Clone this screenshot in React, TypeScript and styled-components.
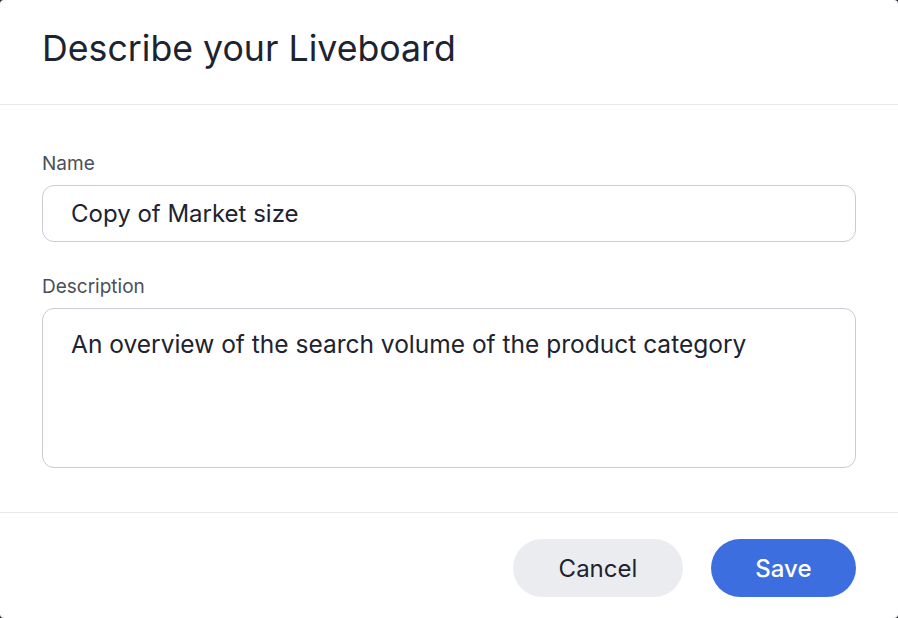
import styled, { createGlobalStyle } from "styled-components";

const GlobalStyle = createGlobalStyle`
  html, body {
    margin: 0;
    padding: 0;
    background: #2b2d33;
  }
  * {
    box-sizing: border-box;
  }
`;

const Dialog = styled.div`
  width: 898px;
  height: 618px;
  background: #ffffff;
  border-radius: 4px;
  display: flex;
  flex-direction: column;
  font-family: Inter, "Noto Sans", sans-serif;
  overflow: hidden;
`;

const Header = styled.div`
  height: 105px;
  padding: 26px 42px 0;
  border-bottom: 1px solid #e6e8ec;
`;

const Title = styled.h2`
  margin: 0;
  font-size: 35.7px;
  line-height: 44px;
  font-weight: 400;
  color: #1d2330;
`;

const Body = styled.div`
  padding: 47px 42px 44px;
  display: flex;
  flex-direction: column;
  border-bottom: 1px solid #e6e8ec;
`;

const Field = styled.label<{ $first?: boolean }>`
  display: flex;
  flex-direction: column;
  gap: 9px;
  margin-top: ${(p) => (p.$first ? "0" : "33px")};
`;

const Label = styled.span`
  font-size: 19px;
  line-height: 24px;
  color: #4a4f59;
`;

const TextInput = styled.input`
  height: 57px;
  width: 100%;
  padding: 0 28px;
  border: 1.5px solid #c7cbd3;
  border-radius: 12px;
  font-family: inherit;
  font-size: 24px;
  color: #1d2330;
  outline: none;
  background: #fff;
`;

const TextArea = styled.textarea`
  height: 160px;
  width: 100%;
  padding: 20px 28px;
  border: 1.5px solid #c7cbd3;
  border-radius: 12px;
  font-family: inherit;
  font-size: 24.5px;
  line-height: 30px;
  color: #1d2330;
  resize: none;
  outline: none;
  background: #fff;
`;

const Footer = styled.div`
  flex: 1;
  display: flex;
  justify-content: flex-end;
  align-items: flex-start;
  gap: 28px;
  padding: 26px 42px 0;
`;

const Button = styled.button<{ $primary?: boolean }>`
  height: 58px;
  padding: 0 ${(p) => (p.$primary ? "44.5px" : "45.5px")};
  border: none;
  border-radius: 29px;
  font-family: inherit;
  font-size: 24px;
  font-weight: ${(p) => (p.$primary ? 500 : 400)};
  background: ${(p) => (p.$primary ? "#3d6ee0" : "#ebecf0")};
  color: ${(p) => (p.$primary ? "#ffffff" : "#1d2330")};
  cursor: pointer;
`;

function App() {
  return (
    <>
      <GlobalStyle />
      <Dialog>
        <Header>
          <Title>Describe your Liveboard</Title>
        </Header>
        <Body>
          <Field $first>
            <Label>Name</Label>
            <TextInput defaultValue="Copy of Market size" />
          </Field>
          <Field>
            <Label>Description</Label>
            <TextArea defaultValue="An overview of the search volume of the product category" />
          </Field>
        </Body>
        <Footer>
          <Button>Cancel</Button>
          <Button $primary>Save</Button>
        </Footer>
      </Dialog>
    </>
  );
}

export default App;
